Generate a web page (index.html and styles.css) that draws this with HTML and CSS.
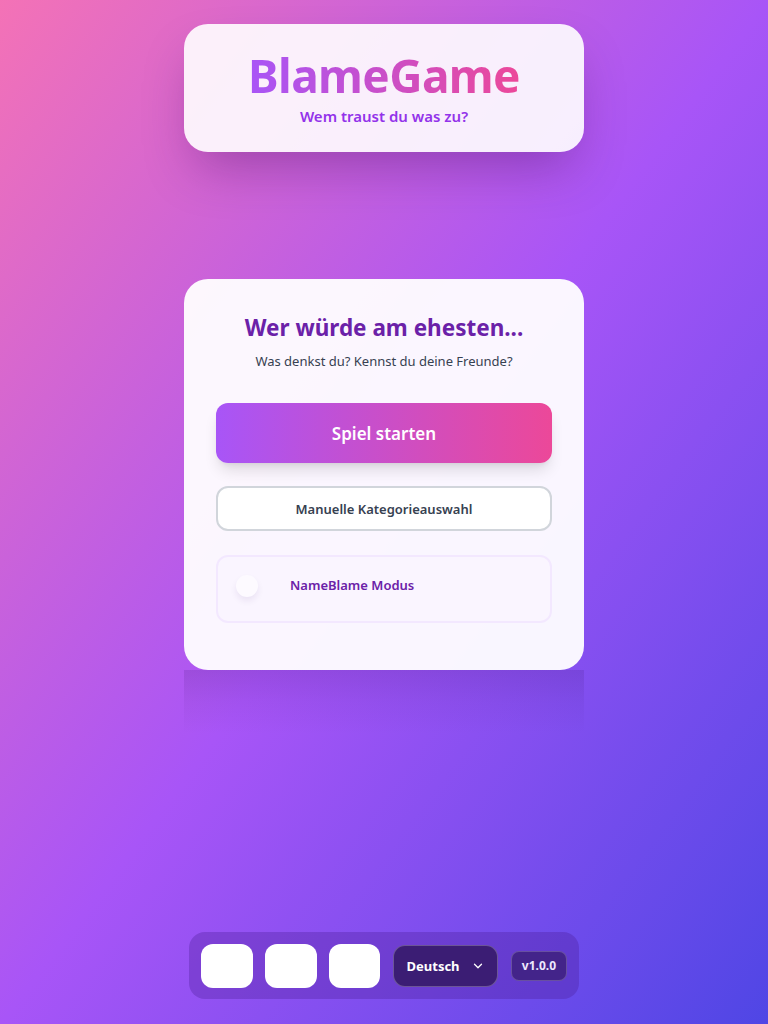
FILE: index.html
```html
<!DOCTYPE html>
<html lang="de">
<head>
<meta charset="utf-8">
<title>BlameGame</title>
<link rel="stylesheet" href="styles.css">
</head>
<body>
<div class="page">
  <header class="hero">
    <h1 class="logo">BlameGame</h1>
    <p class="tagline">Wem traust du was zu?</p>
  </header>

  <main class="card">
    <h2 class="card-title">Wer würde am ehesten...</h2>
    <p class="card-sub">Was denkst du? Kennst du deine Freunde?</p>
    <button class="btn-primary">Spiel starten</button>
    <button class="btn-secondary">Manuelle Kategorieauswahl</button>
    <div class="mode">
      <span class="knob"></span>
      <span class="mode-label">NameBlame Modus</span>
    </div>
  </main>

  <footer class="bar">
    <button class="sq"></button>
    <button class="sq"></button>
    <button class="sq"></button>
    <div class="lang">Deutsch
      <svg width="14" height="14" viewBox="0 0 24 24" fill="none" stroke="currentColor" stroke-width="2.2" stroke-linecap="round" stroke-linejoin="round"><path d="M6 9l6 6 6-6"/></svg>
    </div>
    <span class="ver">v1.0.0</span>
  </footer>
</div>
</body>
</html>
```

FILE: styles.css
```css
* { box-sizing: border-box; }
html, body { margin: 0; padding: 0; }
body {
  font-family: "Noto Sans", "Open Sans", sans-serif;
  background: linear-gradient(to bottom right, #f472b6 0%, #a855f7 50%, #4f46e5 100%);
  min-height: 1024px;
}
.page {
  min-height: 1024px;
  display: flex;
  flex-direction: column;
  align-items: center;
  padding: 24px 0 25px;
}
.hero {
  width: 400px;
  height: 128px;
  border-radius: 24px;
  background: rgba(255,255,255,0.9);
  box-shadow: 0 25px 50px -12px rgba(60,10,90,0.35);
  display: flex;
  flex-direction: column;
  align-items: center;
  padding-top: 23px;
}
.logo {
  margin: 0;
  font-size: 46px;
  font-weight: 700;
  line-height: 56px;
  letter-spacing: -0.6px;
  background: linear-gradient(to right, #a855f7, #ec4899);
  -webkit-background-clip: text;
  background-clip: text;
  color: transparent;
}
.tagline {
  margin: 3px 0 0;
  font-size: 15px;
  font-weight: 600;
  color: #9333ea;
  line-height: 20px;
}
.card {
  margin-top: 127px;
  width: 400px;
  height: 391px;
  border-radius: 24px;
  background: rgba(255,255,255,0.95);
  padding: 34px 32px 32px;
  display: flex;
  flex-direction: column;
  align-items: stretch;
  position: relative;
}
.card::after {
  content: "";
  position: absolute;
  left: 0;
  right: 0;
  top: 100%;
  height: 64px;
  background: linear-gradient(to bottom, rgba(60,20,110,0.16), rgba(60,20,110,0.06) 50%, rgba(60,20,110,0));
  pointer-events: none;
}
.card-title {
  margin: 0;
  text-align: center;
  font-size: 22.5px;
  font-weight: 700;
  color: #6b21a8;
  line-height: 30px;
}
.card-sub {
  margin: 8px 0 0;
  text-align: center;
  font-size: 13px;
  color: #374151;
  line-height: 20px;
}
.btn-primary {
  margin-top: 32px;
  height: 60px;
  border: none;
  border-radius: 12px;
  background: linear-gradient(to right, #a855f7, #ec4899);
  color: #fff;
  font-family: inherit;
  font-size: 17px;
  font-weight: 600;
  box-shadow: 0 10px 15px -3px rgba(0,0,0,0.12), 0 4px 6px -4px rgba(0,0,0,0.1);
}
.btn-secondary {
  margin-top: 23px;
  height: 45px;
  border: 2px solid #d1d5db;
  border-radius: 12px;
  background: #fff;
  color: #374151;
  font-family: inherit;
  font-size: 13px;
  font-weight: 600;
}
.mode {
  margin-top: 24px;
  height: 68px;
  border: 2px solid #f3e8ff;
  border-radius: 12px;
  background: #faf5ff;
  display: flex;
  align-items: center;
  padding: 0 0 8px 18px;
}
.knob {
  width: 22px;
  height: 22px;
  border-radius: 50%;
  background: #fdfaff;
  box-shadow: 0 4px 6px rgba(60,20,110,0.08);
  margin-top: 2px;
}
.mode-label {
  margin-left: 32px;
  font-size: 13px;
  font-weight: 600;
  color: #6b21a8;
}
.bar {
  margin-top: auto;
  width: 390px;
  height: 67px;
  border-radius: 16px;
  background: rgba(76,29,149,0.32);
  display: flex;
  align-items: center;
  padding: 0 12px;
  gap: 12px;
}
.sq {
  width: 52px;
  height: 44px;
  border: none;
  border-radius: 12px;
  background: #fff;
  padding: 0;
}
.lang {
  margin-left: 1px;
  width: 105px;
  height: 42px;
  border-radius: 12px;
  background: #3b1d74;
  border: 1px solid rgba(255,255,255,0.25);
  color: #fff;
  font-size: 13px;
  font-weight: 700;
  display: flex;
  align-items: center;
  justify-content: center;
  gap: 11px;
}
.ver {
  margin-left: 1px;
  height: 30px;
  padding: 0 10px;
  border-radius: 8px;
  background: #43248a;
  border: 1px solid rgba(255,255,255,0.2);
  color: #ede9fe;
  font-size: 12px;
  font-weight: 700;
  display: flex;
  align-items: center;
}
```
